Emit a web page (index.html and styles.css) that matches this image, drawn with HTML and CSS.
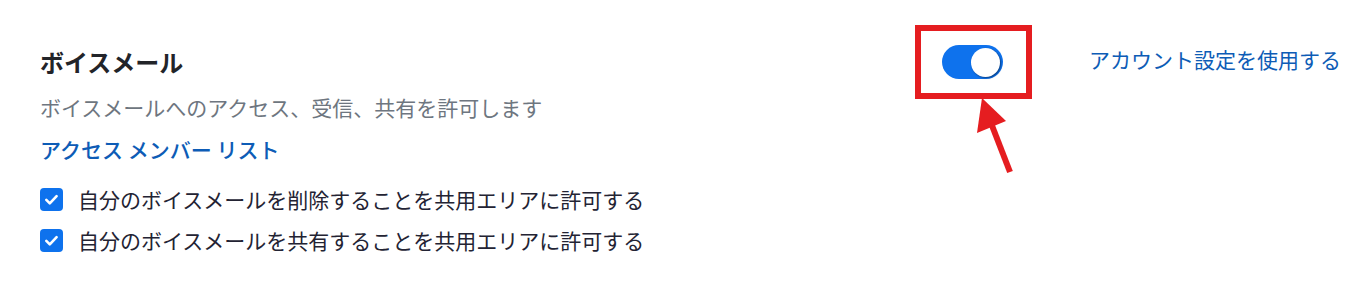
FILE: index.html
```html
<!DOCTYPE html>
<html lang="ja">
<head>
<meta charset="utf-8">
<link rel="stylesheet" href="styles.css">
</head>
<body>
<div class="setting">
  <div class="left">
    <div class="title">ボイスメール</div>
    <div class="desc">ボイスメールへのアクセス、受信、共有を許可します</div>
    <a class="member-link">アクセス メンバー リスト</a>
    <div class="options">
      <label class="option">
        <span class="checkbox"><svg viewBox="0 0 23 23" width="23" height="23"><path d="M6.3 11.8l3.5 3.5 6.8-7.2" fill="none" stroke="#fff" stroke-width="2.6" stroke-linecap="round" stroke-linejoin="round"/></svg></span>
        <span class="option-text">自分のボイスメールを削除することを共用エリアに許可する</span>
      </label>
      <label class="option">
        <span class="checkbox"><svg viewBox="0 0 23 23" width="23" height="23"><path d="M6.3 11.8l3.5 3.5 6.8-7.2" fill="none" stroke="#fff" stroke-width="2.6" stroke-linecap="round" stroke-linejoin="round"/></svg></span>
        <span class="option-text">自分のボイスメールを共有することを共用エリアに許可する</span>
      </label>
    </div>
  </div>
  <div class="toggle"><span class="knob"></span></div>
  <a class="account-link">アカウント設定を使用する</a>
</div>
<svg class="annotation" width="1363" height="288" viewBox="0 0 1363 288">
  <rect x="918" y="28" width="111" height="68" fill="none" stroke="#e51d20" stroke-width="6"/>
  <polygon points="982,98 977,133 1006,121" fill="#e51d20"/>
  <line x1="991" y1="123" x2="1010" y2="172" stroke="#e51d20" stroke-width="6"/>
</svg>
</body>
</html>
```
FILE: styles.css
```css
html, body {
  margin: 0;
  padding: 0;
  background: #ffffff;
}
body {
  font-family: "Noto Sans CJK JP", "Noto Sans", sans-serif;
  position: relative;
  width: 1363px;
  height: 288px;
  overflow: hidden;
}
.setting {
  display: flex;
  align-items: flex-start;
  padding: 46px 22px 0 40px;
}
.left {
  flex: 1;
  display: flex;
  flex-direction: column;
  align-items: flex-start;
}
.title {
  font-size: 24px;
  font-weight: 700;
  line-height: 32px;
  color: #222429;
}
.desc {
  margin-top: 14px;
  font-size: 21px;
  line-height: 30px;
  color: #6e7680;
}
.member-link {
  margin-top: 12px;
  font-size: 21px;
  line-height: 30px;
  font-weight: 500;
  color: #0d5cb6;
}
.options {
  margin-top: 20px;
  display: flex;
  flex-direction: column;
  gap: 11px;
}
.option {
  display: flex;
  align-items: center;
  gap: 15px;
  height: 30px;
}
.checkbox {
  width: 23px;
  height: 23px;
  border-radius: 4px;
  background: #0e72ed;
  display: flex;
}
.option-text {
  font-size: 21px;
  line-height: 30px;
  color: #232333;
}
.toggle {
  margin-top: -1px;
  margin-right: 86px;
  width: 61px;
  height: 34px;
  border-radius: 17px;
  background: #0e72ed;
  display: flex;
  align-items: center;
  justify-content: flex-end;
  padding: 0 3px;
  box-sizing: border-box;
}
.knob {
  width: 29px;
  height: 29px;
  border-radius: 50%;
  background: #ffffff;
  box-shadow: 1px 1px 2px rgba(0, 0, 0, 0.45);
}
.account-link {
  margin-top: -2px;
  font-size: 21px;
  line-height: 30px;
  color: #0d5cb6;
}
.annotation {
  position: absolute;
  left: 0;
  top: 0;
  pointer-events: none;
}
```
